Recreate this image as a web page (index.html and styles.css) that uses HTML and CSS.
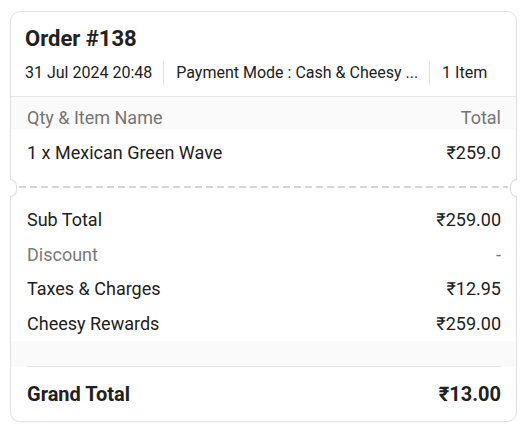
FILE: index.html
```html
<!DOCTYPE html>
<html lang="en">
<head>
    <meta charset="UTF-8">
    <meta name="viewport" content="width=device-width, initial-scale=1.0">
    <title>Order #138</title>
    <link rel="stylesheet" href="styles.css">
</head>
<body>
    <div class="card">
        <div class="card-head">
            <h1>Order #138</h1>
            <div class="meta">
                <span class="meta-item">31 Jul 2024 20:48</span>
                <span class="meta-item">Payment Mode : Cash &amp; Cheesy ...</span>
                <span class="meta-item">1 Item</span>
            </div>
        </div>

        <div class="row cols">
            <span>Qty &amp; Item Name</span>
            <span>Total</span>
        </div>
        <div class="row item">
            <span>1 x Mexican Green Wave</span>
            <span>&#8377;259.0</span>
        </div>

        <div class="tear">
            <span class="notch left"></span>
            <span class="notch right"></span>
        </div>

        <div class="totals">
            <div class="row">
                <span>Sub Total</span>
                <span>&#8377;259.00</span>
            </div>
            <div class="row muted">
                <span>Discount</span>
                <span>-</span>
            </div>
            <div class="row">
                <span>Taxes &amp; Charges</span>
                <span>&#8377;12.95</span>
            </div>
            <div class="row">
                <span>Cheesy Rewards</span>
                <span>&#8377;259.00</span>
            </div>
        </div>
        <div class="gap"></div>

        <div class="row grand">
            <span>Grand Total</span>
            <span>&#8377;13.00</span>
        </div>
    </div>
</body>
</html>
```

FILE: styles.css
```css
body {
    margin: 0;
    padding: 11px 10px;
    background: #fff;
    font-family: Roboto, "Noto Sans", Arial, sans-serif;
    color: #212121;
}
.card {
    position: relative;
    border: 1px solid #e2e2e2;
    border-radius: 10px;
    background: #fff;
    box-shadow: 0 1px 2px rgba(0, 0, 0, 0.04);
}
.card-head {
    padding: 13px 15px 0 14px;
    border-bottom: 1px solid #e6e6e6;
}
h1 {
    margin: 0;
    font-size: 22px;
    line-height: 28px;
    font-weight: 700;
}
.meta {
    display: flex;
    align-items: center;
    height: 40px;
    padding-bottom: 3px;
    font-size: 16px;
}
.meta-item {
    padding: 0 11px 0 12px;
    line-height: 24px;
    border-left: 1px solid #e2e2e2;
}
.meta-item:first-child {
    padding-left: 0;
    border-left: none;
}
.row {
    display: flex;
    justify-content: space-between;
    align-items: center;
    padding: 0 15px 0 16px;
    font-size: 18px;
    line-height: 20px;
}
.cols {
    padding-top: 11px;
    padding-bottom: 1px;
    background: #fafafa;
    color: #757575;
}
.item {
    padding-top: 14px;
    padding-bottom: 14px;
}
.tear {
    position: relative;
    height: 20px;
}
.tear::before {
    content: "";
    position: absolute;
    left: 8px;
    right: 8px;
    top: 9px;
    height: 1.5px;
    background: repeating-linear-gradient(90deg, #d6d6d6 0 7px, transparent 7px 11px);
}
.notch {
    position: absolute;
    top: 2px;
    width: 6px;
    height: 16px;
    background: #fff;
    border: 1px solid #dcdcdc;
}
.notch.left {
    left: -1px;
    border-left: none;
    border-radius: 0 8px 8px 0;
}
.notch.right {
    right: -1px;
    border-right: none;
    border-radius: 8px 0 0 8px;
}
.totals {
    padding-top: 6px;
}
.totals .row {
    height: 34.5px;
}
.muted {
    color: #7a7a7a;
}
.gap {
    height: 25px;
    margin: 0 15px 0 16px;
    border-bottom: 1px solid #e6e6e6;
    background: #fafafa;
    box-shadow: -16px 0 0 #fafafa, 15px 0 0 #fafafa;
}
.grand {
    height: 54px;
    font-size: 20px;
    font-weight: 700;
}
```
